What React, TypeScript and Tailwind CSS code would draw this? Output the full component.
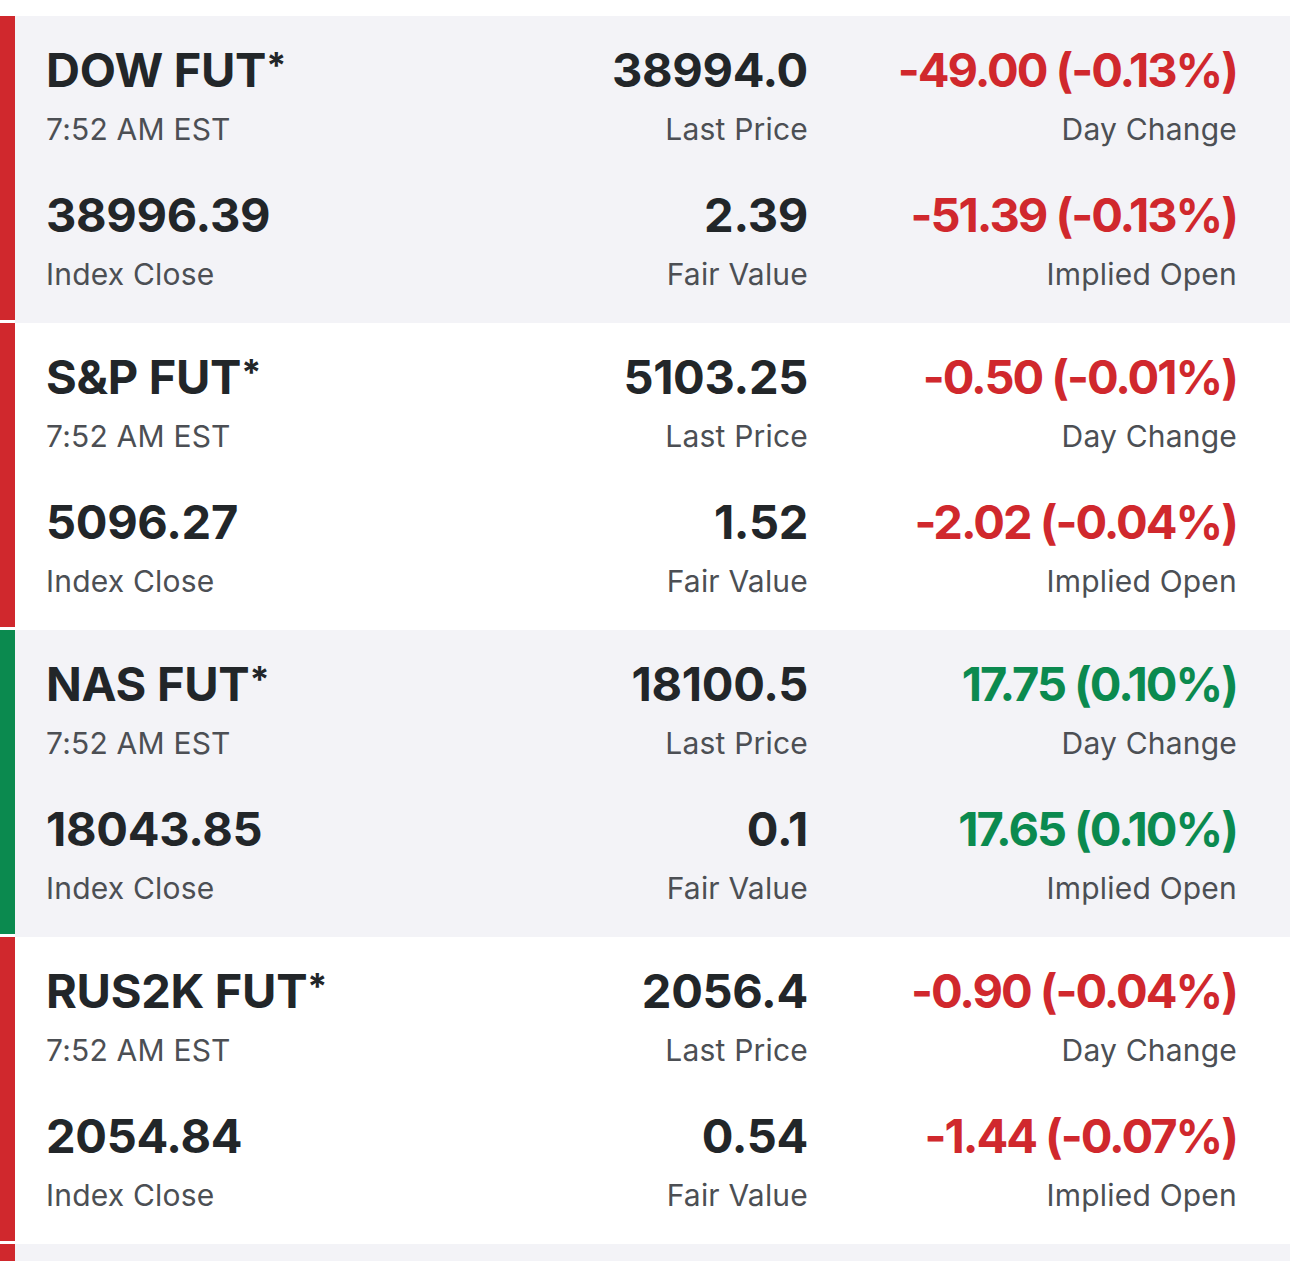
import React from 'react'

type Tone = 'up' | 'down'

interface FutureRow {
  name: string
  time: string
  last: string
  dayChange: string
  indexClose: string
  fairValue: string
  impliedOpen: string
  tone: Tone
}

const rows: FutureRow[] = [
  {
    name: 'DOW FUT',
    time: '7:52 AM EST',
    last: '38994.0',
    dayChange: '-49.00 (-0.13%)',
    indexClose: '38996.39',
    fairValue: '2.39',
    impliedOpen: '-51.39 (-0.13%)',
    tone: 'down',
  },
  {
    name: 'S&P FUT',
    time: '7:52 AM EST',
    last: '5103.25',
    dayChange: '-0.50 (-0.01%)',
    indexClose: '5096.27',
    fairValue: '1.52',
    impliedOpen: '-2.02 (-0.04%)',
    tone: 'down',
  },
  {
    name: 'NAS FUT',
    time: '7:52 AM EST',
    last: '18100.5',
    dayChange: '17.75 (0.10%)',
    indexClose: '18043.85',
    fairValue: '0.1',
    impliedOpen: '17.65 (0.10%)',
    tone: 'up',
  },
  {
    name: 'RUS2K FUT',
    time: '7:52 AM EST',
    last: '2056.4',
    dayChange: '-0.90 (-0.04%)',
    indexClose: '2054.84',
    fairValue: '0.54',
    impliedOpen: '-1.44 (-0.07%)',
    tone: 'down',
  },
]

function Cell({
  value,
  label,
  align = 'left',
  color = 'text-[#222629]',
  tight = false,
}: {
  value: React.ReactNode
  label: string
  align?: 'left' | 'right'
  color?: string
  tight?: boolean
}) {
  return (
    <div className={align === 'right' ? 'text-right' : 'text-left'}>
      <div
        className={`text-[47px] leading-[56px] font-bold whitespace-nowrap ${
          tight ? 'tracking-[-2px]' : 'tracking-[-0.3px]'
        } ${color}`}
      >
        {value}
      </div>
      <div className="mt-[13px] text-[30px] leading-[36px] tracking-[0.2px] text-[#4c4f54] whitespace-nowrap">{label}</div>
    </div>
  )
}

function Row({ row, shaded }: { row: FutureRow; shaded: boolean }) {
  const bar = row.tone === 'up' ? 'bg-[#0b8a4f]' : 'bg-[#d0282d]'
  const change = row.tone === 'up' ? 'text-[#0b8a4f]' : 'text-[#d0282d]'

  return (
    <div className={`flex ${shaded ? 'bg-[#f3f3f7]' : 'bg-white'}`}>
      {/* status bar, with a white notch at the bottom */}
      <div className="w-[15px] shrink-0 bg-white flex flex-col">
        <div className={`flex-1 ${bar}`} />
        <div className="h-[3px]" />
      </div>
      <div className="flex-1 pl-[31px] pr-[53px] pt-[26px] pb-[31px] grid grid-cols-[1fr_300px_429px] gap-y-[40px]">
        <Cell
          value={
            <>
              {row.name}
              <span className="relative top-[-9px] text-[36px] leading-none">*</span>
            </>
          }
          label={row.time}
        />
        <Cell value={row.last} label="Last Price" align="right" />
        <Cell value={row.dayChange} label="Day Change" align="right" color={change} tight />
        <Cell value={row.indexClose} label="Index Close" />
        <Cell value={row.fairValue} label="Fair Value" align="right" />
        <Cell value={row.impliedOpen} label="Implied Open" align="right" color={change} tight />
      </div>
    </div>
  )
}

export default function App() {
  return (
    <div className="bg-white pt-[16px] font-['Inter','Noto_Sans',sans-serif]">
      {rows.map((row, i) => (
        <Row key={row.name} row={row} shaded={i % 2 === 0} />
      ))}
      {/* next row peeking in at the bottom */}
      <div className="flex bg-[#f3f3f7] h-[18px]">
        <div className="w-[15px] bg-[#d0282d]" />
      </div>
    </div>
  )
}
